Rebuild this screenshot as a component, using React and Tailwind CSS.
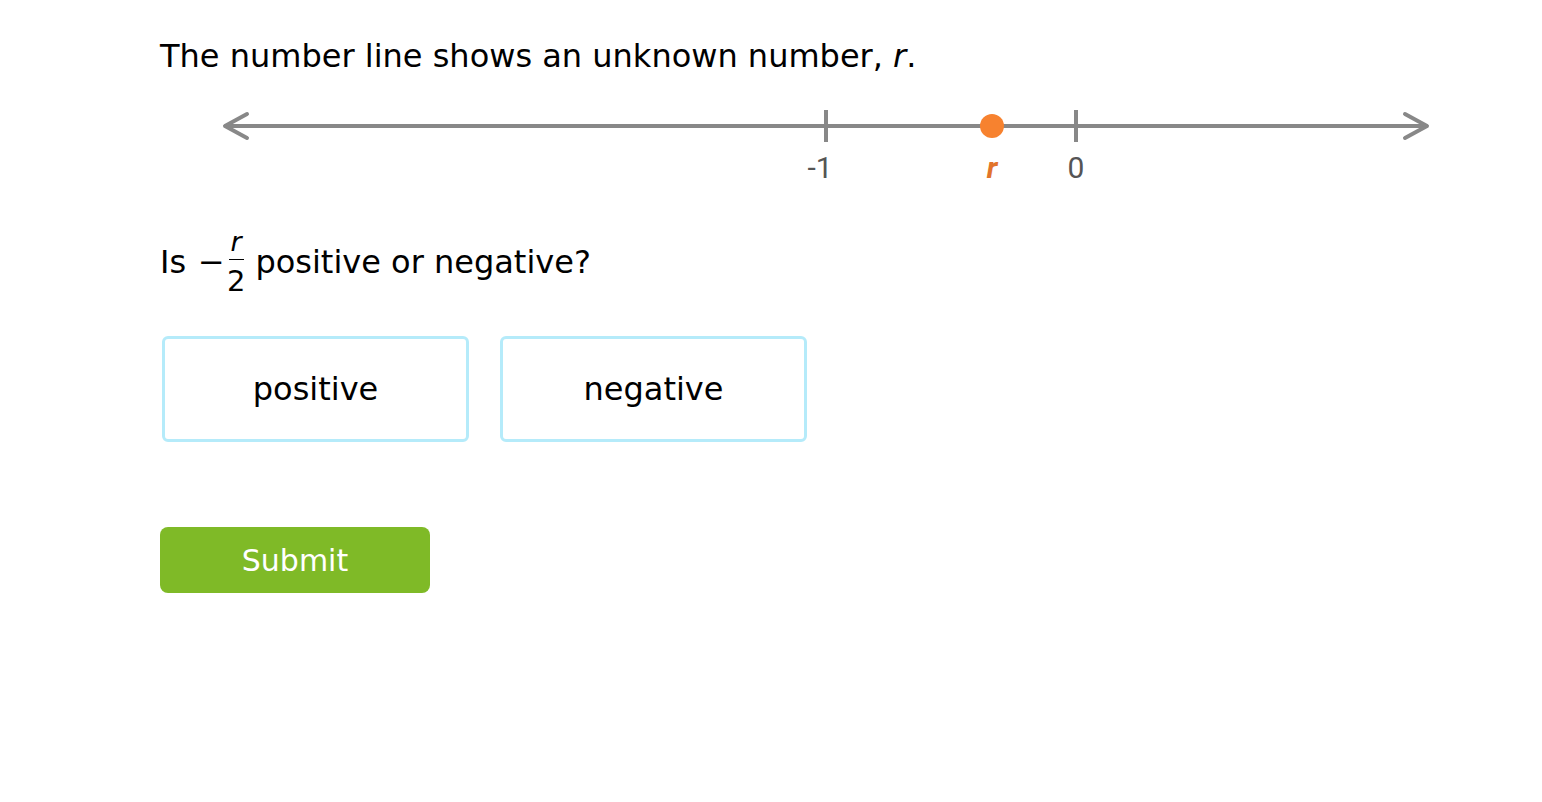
export default function App() {
  const font = { fontFamily: '"DejaVu Sans", Verdana, sans-serif' };
  return (
    <div className="min-h-screen bg-white text-black pl-[160px] pt-[36px]" style={font}>
      <p className="text-[32px] leading-[40px]">
        The number line shows an unknown number, <i>r</i>.
      </p>

      <div className="mt-[20px] ml-[40px] h-[90px]">
        <svg width="1260" height="90" viewBox="0 0 1260 90">
          <g stroke="#888888" strokeWidth="4" strokeLinecap="round" fill="none">
            <line x1="26" y1="30" x2="1226" y2="30" />
            <polyline points="47,18 25,30 47,42" strokeLinejoin="round" />
            <polyline points="1205,18 1227,30 1205,42" strokeLinejoin="round" />
            <line x1="626" y1="14" x2="626" y2="46" strokeLinecap="butt" />
            <line x1="876" y1="14" x2="876" y2="46" strokeLinecap="butt" />
          </g>
          <circle cx="792" cy="30" r="12" fill="#f7822f" />
          <g style={{ fontFamily: 'Roboto, "Open Sans", sans-serif' }} fontSize="30" fill="#555555" textAnchor="middle">
            <text x="620" y="82">-1</text>
            <text x="876" y="82">0</text>
            <text x="792" y="82" fill="#e2742b" fontStyle="italic" fontWeight="bold">r</text>
          </g>
        </svg>
      </div>

      <div className="mt-[42px] flex items-center text-[32px] leading-[40px]">
        <span>Is</span>
        <span className="ml-[12px]">−</span>
        <span className="inline-flex flex-col items-center mx-[2px]">
          <i className="text-[27px] leading-[28px] pb-[3px] border-b-[1.5px] border-black px-[2px]">r</i>
          <span className="text-[29px] leading-[30px] pt-[6px]">2</span>
        </span>
        <span className="ml-[8px]">positive or negative?</span>
      </div>

      <div className="mt-[40px] flex gap-[31px]">
        <button className="w-[307px] h-[106px] rounded-[6px] border-[3px] border-[#b5ebfa] bg-white text-[32px] ml-[2px]">
          positive
        </button>
        <button className="w-[307px] h-[106px] rounded-[6px] border-[3px] border-[#b5ebfa] bg-white text-[32px]">
          negative
        </button>
      </div>

      <button className="block mt-[85px] w-[270px] h-[66px] rounded-[8px] bg-[#7fba27] text-white text-[30px]">
        Submit
      </button>
    </div>
  );
}
